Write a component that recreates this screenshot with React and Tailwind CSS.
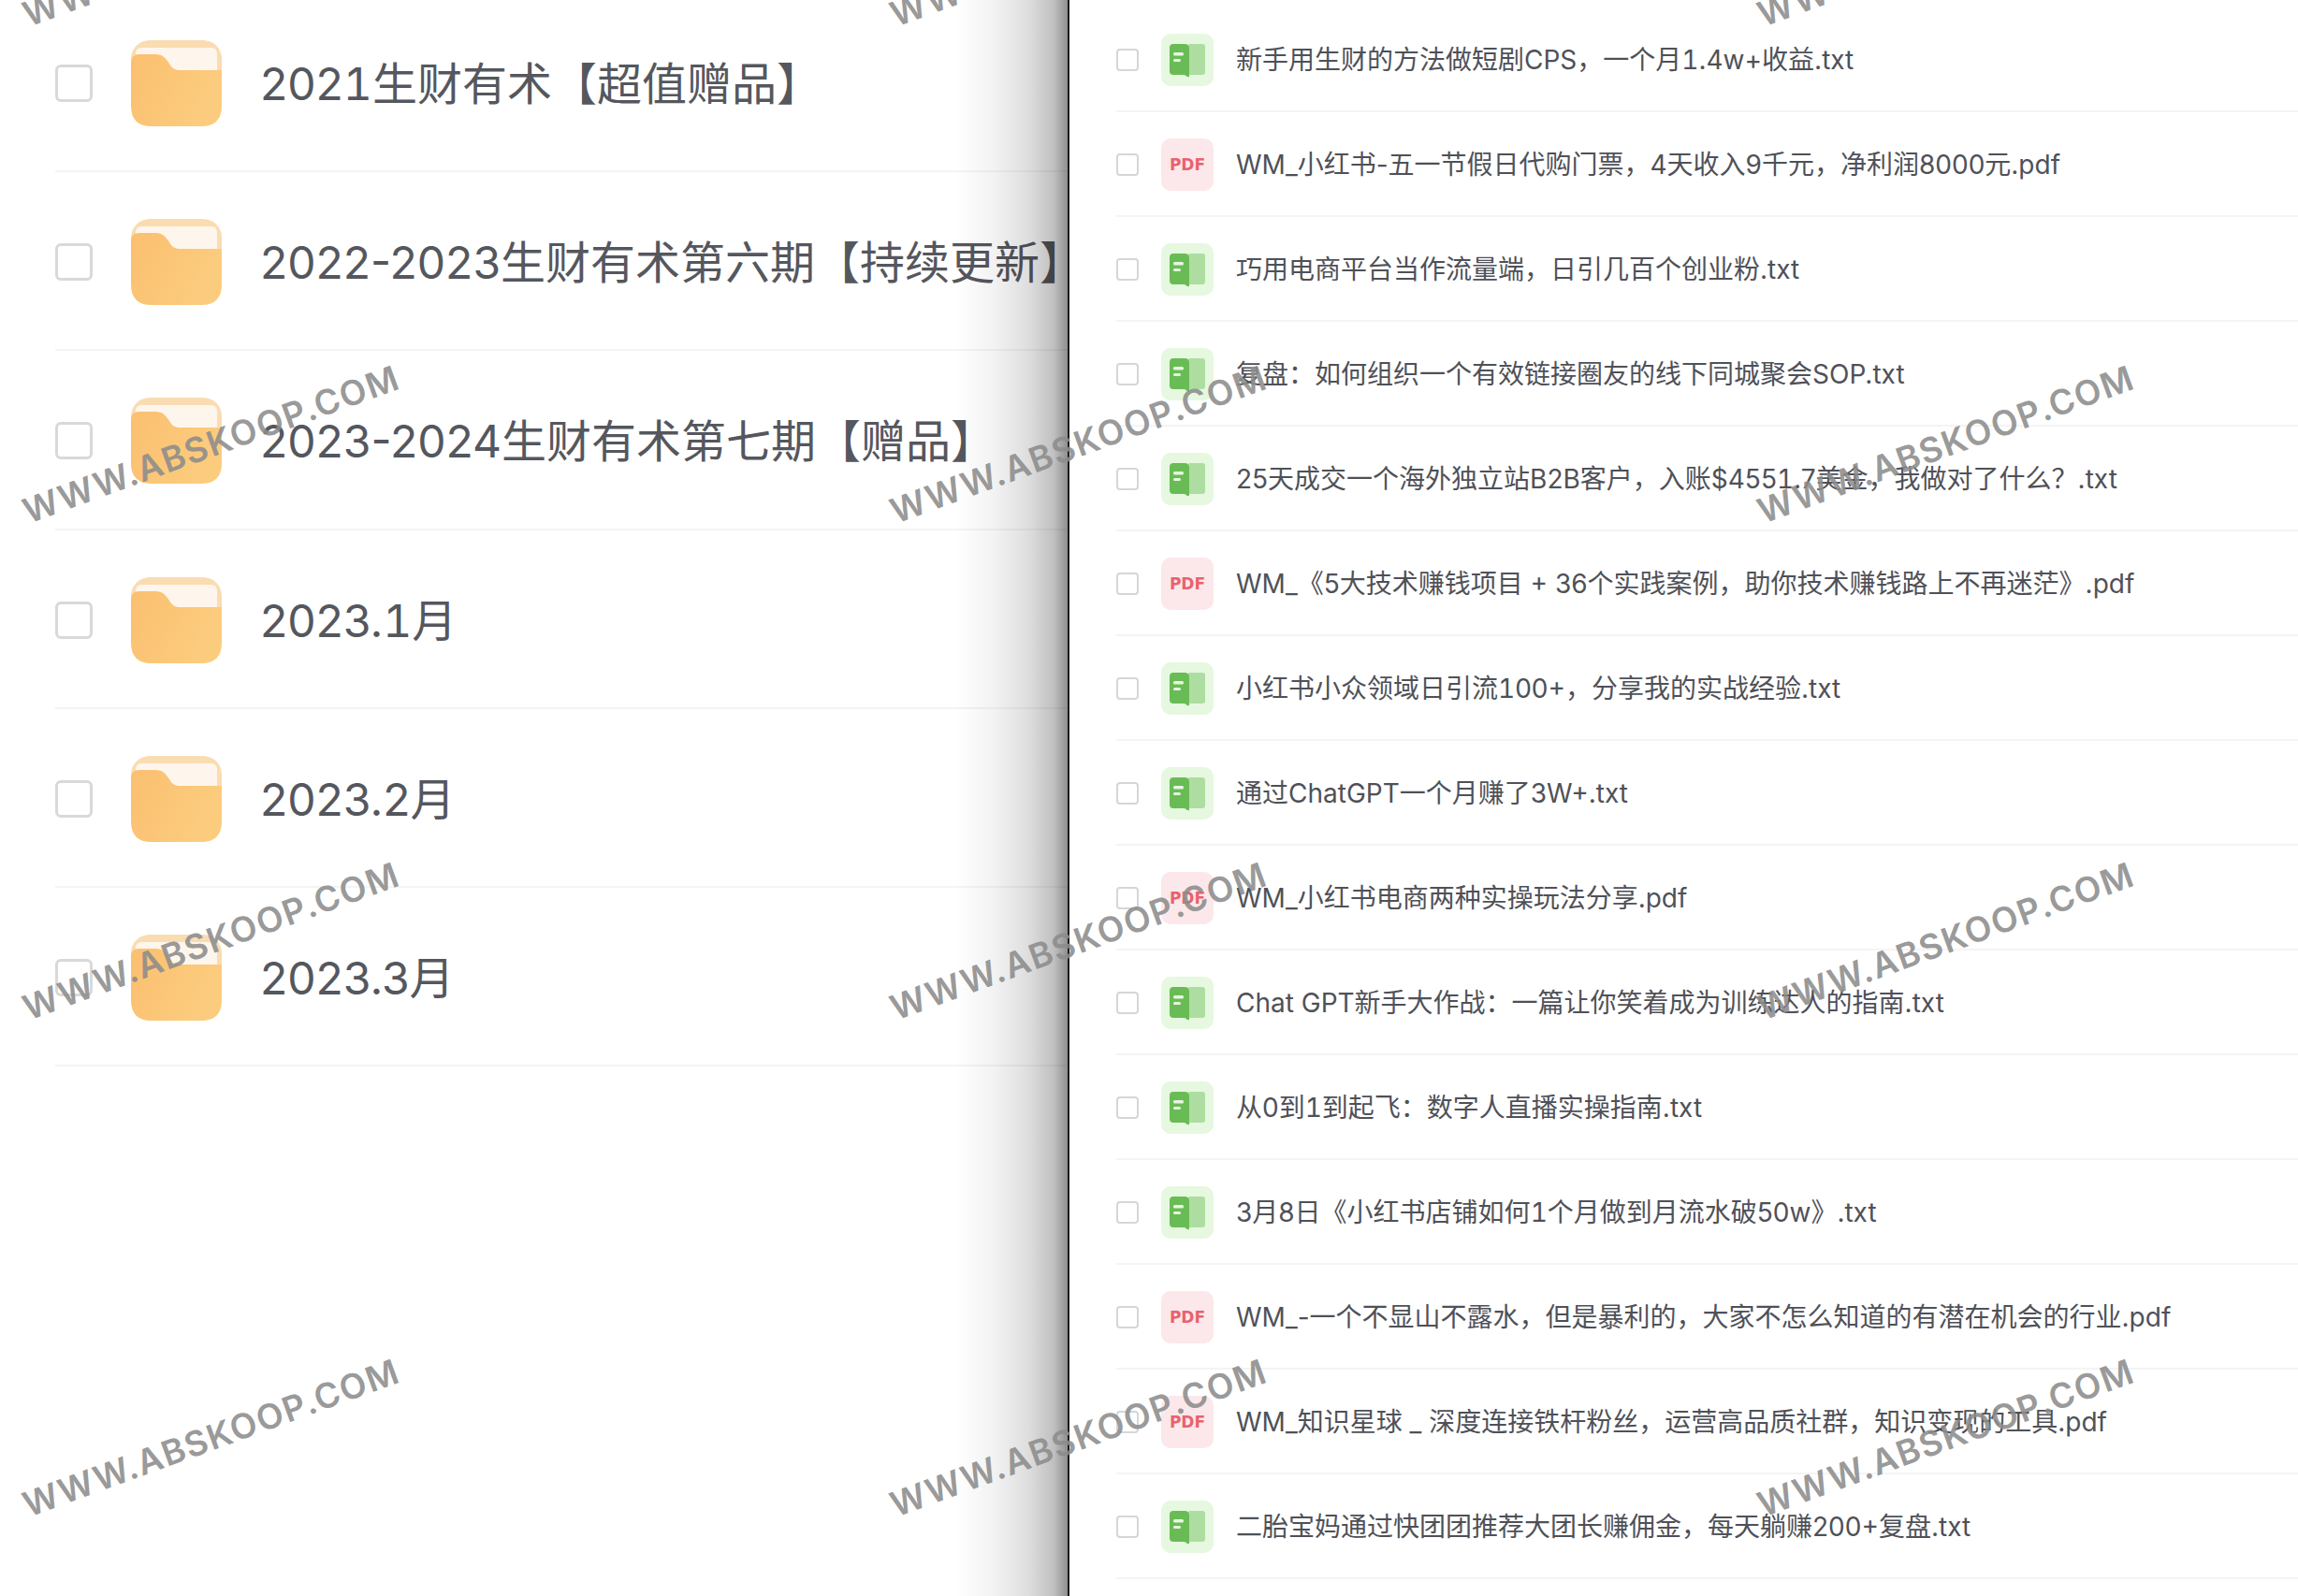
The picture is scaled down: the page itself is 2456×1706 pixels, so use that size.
const folders = ["2021生财有术【超值赠品】","2022-2023生财有术第六期【持续更新】","2023-2024生财有术第七期【赠品】","2023.1月","2023.2月","2023.3月"];
const files = [
"新手用生财的方法做短剧CPS，一个月1.4w+收益.txt",
"WM_小红书-五一节假日代购门票，4天收入9千元，净利润8000元.pdf",
"巧用电商平台当作流量端，日引几百个创业粉.txt",
"复盘：如何组织一个有效链接圈友的线下同城聚会SOP.txt",
"25天成交一个海外独立站B2B客户，入账$4551.7美金，我做对了什么？.txt",
"WM_《5大技术赚钱项目 + 36个实践案例，助你技术赚钱路上不再迷茫》.pdf",
"小红书小众领域日引流100+，分享我的实战经验.txt",
"通过ChatGPT一个月赚了3W+.txt",
"WM_小红书电商两种实操玩法分享.pdf",
"Chat GPT新手大作战：一篇让你笑着成为训练达人的指南.txt",
"从0到1到起飞：数字人直播实操指南.txt",
"3月8日《小红书店铺如何1个月做到月流水破50w》.txt",
"WM_-一个不显山不露水，但是暴利的，大家不怎么知道的有潜在机会的行业.pdf",
"WM_知识星球 _ 深度连接铁杆粉丝，运营高品质社群，知识变现的工具.pdf",
"二胎宝妈通过快团团推荐大团长赚佣金，每天躺赚200+复盘.txt",
];

function Label({ text }) {
  return text.split(/(1)/).map((part, i) =>
    part === "1" ? <span key={i} className="tabular-nums">1</span> : part
  );
}

function FolderIcon() {
  return (
    <svg width="97" height="92" viewBox="0 0 97 92" className="shrink-0">
      <defs>
        <linearGradient id="fg" x1="0" y1="0" x2="1" y2="0.4">
          <stop offset="0" stopColor="#fbbf70" />
          <stop offset="1" stopColor="#fccc7e" />
        </linearGradient>
      </defs>
      <rect x="0" y="0" width="97" height="80" rx="20" fill="#fadcb2" />
      <rect x="5" y="8" width="87" height="40" rx="6" fill="#fef6ec" />
      <path d="M0 24 Q0 15 9 15 H26 C34 15 37 19 41 25 C44 30 47 32 52 32 H97 V70 Q97 92 75 92 H22 Q0 92 0 70 Z" fill="url(#fg)" />
    </svg>
  );
}

function BookIcon() {
  return (
    <div className="w-14 h-14 rounded-[10px] bg-[#e6f8df] shrink-0">
      <svg width="56" height="56" viewBox="0 0 56 56">
        <rect x="28" y="11" width="19" height="33" rx="3" fill="#aedda2" />
        <path d="M13 11 H25 Q30 11 30 16 V45 Q30 47 28 46 L25 44 H13 Q9 44 9 40 V15 Q9 11 13 11 Z" fill="#69bc55" />
        <rect x="13" y="20" width="11" height="3.5" rx="1.5" fill="#e6f5e0" />
        <rect x="13" y="27" width="8" height="3" rx="1.5" fill="#e6f5e0" />
      </svg>
    </div>
  );
}

function PdfIcon() {
  return (
    <div className="w-14 h-14 rounded-[10px] bg-[#fce8ea] shrink-0 flex items-center justify-center font-['DejaVu_Sans',sans-serif] font-bold text-[17px] text-[#e8626f] leading-none">
      PDF
    </div>
  );
}

export default function App() {
  return (
    <div className="relative w-[2456px] h-[1706px] overflow-hidden bg-white flex font-['Inter','Noto_Sans_CJK_SC',sans-serif]">
      <div className="w-[1141px] shrink-0 overflow-hidden pl-[59px] -mt-[7px]">
        {folders.map((name) => (
          <div key={name} className="h-[191.2px] w-[1200px] pt-[3px] flex items-center border-b-2 border-[#f4f4f5]">
            <div className="w-10 h-10 rounded-[6px] border-[3px] border-[#d9d9dc] bg-white shrink-0" />
            <div className="ml-[41px]"><FolderIcon /></div>
            <div className="ml-[41px] pt-[2px] text-[48px] leading-none whitespace-nowrap text-[#55575e]"><Label text={name} /></div>
          </div>
        ))}
      </div>
      <div className="w-[2px] shrink-0 bg-[#1c1c1c]" />
      <div className="flex-1 overflow-hidden pl-[50px] pt-[8px]">
        {files.map((name) => (
          <div key={name} className="h-[112px] pt-[2px] flex items-center border-b-2 border-[#f4f4f5]">
            <div className="w-6 h-6 rounded-[4px] border-2 border-[#d6d6d9] bg-white shrink-0" />
            <div className="ml-6">{name.endsWith(".pdf") ? <PdfIcon /> : <BookIcon />}</div>
            <div className="ml-6 text-[28px] leading-none whitespace-nowrap text-[#4f5158]"><Label text={name} /></div>
          </div>
        ))}
      </div>
      <div className="absolute top-0 left-[1021px] w-[120px] h-full bg-[linear-gradient(90deg,rgba(0,0,0,0)_0%,rgba(0,0,0,0.05)_35%,rgba(0,0,0,0.13)_65%,rgba(0,0,0,0.25)_88%,rgba(0,0,0,0.44)_100%)]" />
      <div className="absolute left-[-237.5px] top-[-322.5px] grid grid-cols-[repeat(3,927px)] auto-rows-[531px]">
        {Array.from({ length: 12 }).map((_, i) => (
          <div key={i} className="flex items-center justify-center">
            <span className="-rotate-20 whitespace-nowrap font-['Inter',sans-serif] font-semibold text-[37px] tracking-[1.5px] leading-none text-[#8c8c8c]/90">WWW.ABSKOOP.COM</span>
          </div>
        ))}
      </div>
    </div>
  );
}
